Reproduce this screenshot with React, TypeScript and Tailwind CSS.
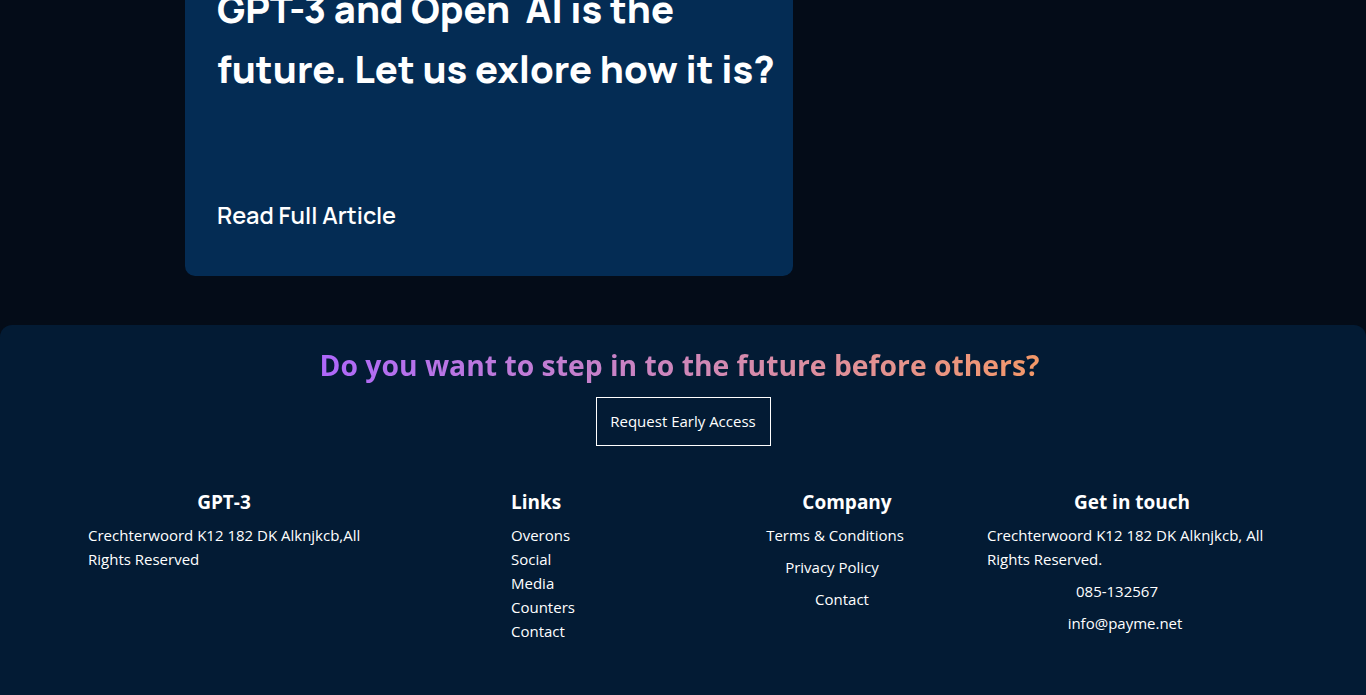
import React from "react";

const sans = { fontFamily: '"Open Sans", "Noto Sans", sans-serif' };
const manrope = { fontFamily: 'Manrope, Inter, "Noto Sans", sans-serif' };

export default function App() {
  return (
    <div className="min-h-[695px] w-full overflow-hidden bg-[#040c18]">
      <div className="pl-[185px]">
        <div className="-mt-[54px] flex h-[330px] w-[608px] flex-col rounded-[10px] bg-[#042c54] pl-[32px] pr-[12px] pt-[32px]">
          <h2 className="whitespace-nowrap text-[38px] font-extrabold leading-[60px] text-white" style={manrope}>
            GPT-3 and Open&nbsp; AI is the
            <br />
            future. Let us exlore how it is?
          </h2>
          <p className="mt-[102px] text-[23.5px] font-semibold leading-[30px] text-white" style={manrope}>
            Read Full Article
          </p>
        </div>
      </div>

      <footer
        className="mt-[49px] flex h-[400px] flex-col items-center rounded-t-[12px] bg-[#031b34] pt-[20px] text-white"
        style={sans}
      >
        <h2 className="mr-[7px] bg-gradient-to-r from-[#ae67fa] to-[#f49867] bg-clip-text text-[28.3px] font-bold leading-[40px] text-transparent">
          Do you want to step in to the future before others?
        </h2>
        <button className="mt-[12px] flex h-[49px] w-[175px] items-center justify-center border border-white text-[15px] text-white">
          Request Early Access
        </button>

        <div className="mt-[42px] flex w-full pl-[88px] text-[15px] leading-[24px]">
          <div className="w-[272px]">
            <h4 className="text-center text-[19px] font-bold leading-[28px]">GPT-3</h4>
            <p className="mt-[7px] whitespace-nowrap">
              Crechterwoord K12 182 DK Alknjkcb,All
              <br />
              Rights Reserved
            </p>
          </div>

          <div className="ml-[151px] w-[100px]">
            <h4 className="text-[19px] font-bold leading-[28px]">Links</h4>
            <ul className="mt-[7px]">
              <li>Overons</li>
              <li>Social</li>
              <li>Media</li>
              <li>Counters</li>
              <li>Contact</li>
            </ul>
          </div>

          <div className="ml-[154px] flex w-[140px] flex-col items-center">
            <h4 className="ml-[24px] whitespace-nowrap text-[19px] font-bold leading-[28px]">Company</h4>
            <ul className="mt-[7px] flex flex-col items-center gap-[8px] whitespace-nowrap">
              <li>Terms &amp; Conditions</li>
              <li className="mr-[6px]">Privacy Policy</li>
              <li className="ml-[14px]">Contact</li>
            </ul>
          </div>

          <div className="ml-[82px] flex w-[290px] flex-col items-center">
            <h4 className="text-[19px] font-bold leading-[28px]">Get in touch</h4>
            <p className="mt-[7px] w-full whitespace-nowrap">
              Crechterwoord K12 182 DK Alknjkcb, All
              <br />
              Rights Reserved.
            </p>
            <p className="mr-[30px] mt-[8px]">085-132567</p>
            <p className="mr-[14px] mt-[8px]">info@payme.net</p>
          </div>
        </div>
      </footer>
    </div>
  );
}
